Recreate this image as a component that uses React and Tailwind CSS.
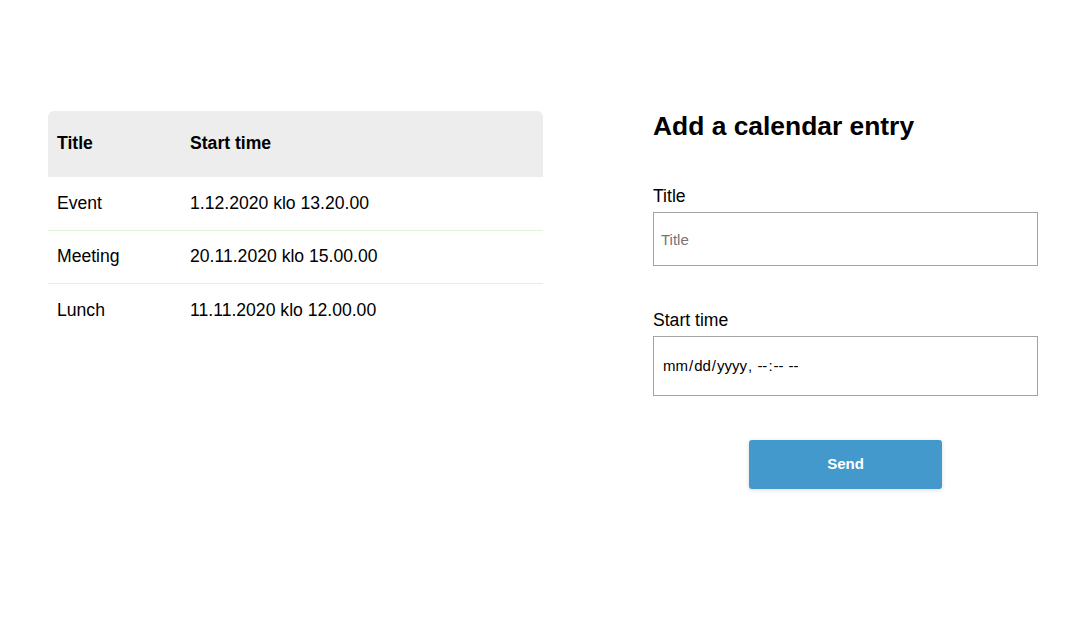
import { useState } from "react";

const entries = [
  { title: "Event", start: "1.12.2020 klo 13.20.00" },
  { title: "Meeting", start: "20.11.2020 klo 15.00.00" },
  { title: "Lunch", start: "11.11.2020 klo 12.00.00" },
];

function EntryTable() {
  return (
    <table className="w-[495px] border-collapse text-left text-[17.6px] text-black">
      <thead>
        <tr className="bg-[#ededed]">
          <th className="h-[66px] w-[142px] rounded-tl-[6px] pb-[2px] pl-[9px] font-bold">Title</th>
          <th className="h-[66px] rounded-tr-[6px] pb-[2px] font-bold">Start time</th>
        </tr>
      </thead>
      <tbody>
        {entries.map((e, i) => (
          <tr key={e.title} className={i < entries.length - 1 ? "border-b border-[#e2f1d4]" : ""}>
            <td className="h-[53px] pl-[9px]">{e.title}</td>
            <td className="h-[53px]">{e.start}</td>
          </tr>
        ))}
      </tbody>
    </table>
  );
}

function EntryForm() {
  const [title, setTitle] = useState("");
  const [start, setStart] = useState("");

  return (
    <form className="flex w-[385px] flex-col" onSubmit={(e) => e.preventDefault()}>
      <h1 className="text-[26.4px] font-bold leading-[30px] text-black">Add a calendar entry</h1>

      <label className="mt-[43px] text-[17.6px] leading-[24px] text-black">Title</label>
      <input
        value={title}
        onChange={(e) => setTitle(e.target.value)}
        placeholder="Title"
        className="mt-[4px] h-[54px] w-full border border-[#a3a3a3] px-[7px] text-[15px] placeholder:text-[#757575] focus:outline-none"
      />

      <label className="mt-[42px] text-[17.6px] leading-[24px] text-black">Start time</label>
      <input
        type="datetime-local"
        value={start}
        onChange={(e) => setStart(e.target.value)}
        className="mt-[4px] h-[60px] w-full border border-[#a3a3a3] px-[8px] text-[15px] text-black focus:outline-none [&::-webkit-calendar-picker-indicator]:hidden"
      />

      <button
        type="submit"
        className="mx-auto mt-[44px] h-[49px] w-[193px] rounded-[3px] bg-[#4399cc] text-[15px] font-bold text-white shadow-[0_1px_4px_rgba(0,0,0,0.15)]"
      >
        Send
      </button>
    </form>
  );
}

export default function App() {
  return (
    <div className="min-h-screen bg-white font-['Liberation_Sans',Arial,sans-serif]">
      <div className="flex items-start gap-[110px] pl-[48px] pt-[111px]">
        <EntryTable />
        <EntryForm />
      </div>
    </div>
  );
}
